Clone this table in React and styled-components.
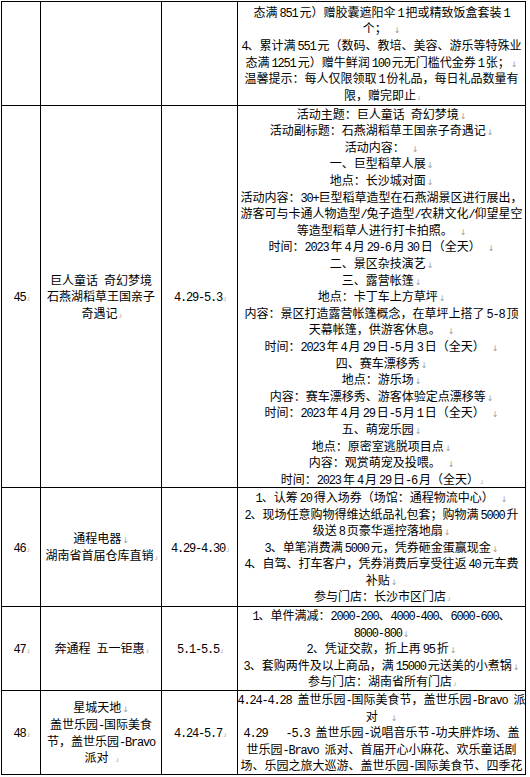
import React from 'react';
import styled, { createGlobalStyle } from 'styled-components';

const GlobalStyle = createGlobalStyle`
  html, body { margin: 0; padding: 0; background: #fff; }
`;

const Page = styled.div`
  padding: 1px 0 0 1px;
  font-family: "Noto Sans CJK SC", "Noto Sans", sans-serif;
  font-size: 12px;
  color: #000;
`;

const Table = styled.div`
  display: grid;
  grid-template-columns: 38px 120px 75px 287px;
  grid-template-rows: 103px 381px 118px 83px 83px;
  gap: 1px;
  background: #000;
  border: 1px solid #000;
  width: max-content;
`;

const Cell = styled.div`
  background: #fff;
  display: flex;
  flex-direction: column;
  justify-content: ${(p) => (p.$cut ? 'flex-start' : 'center')};
  align-items: center;
  overflow: hidden;
  min-width: 0;
`;

const Line = styled.div`
  flex: none;
  height: 16.6px;
  line-height: 16.6px;
  white-space: pre;
  text-align: center;
`;

const Lat = styled.span`
  font-family: "Liberation Mono", monospace;
  letter-spacing: -1.2px;
  margin-left: ${(p) => (p.$l ? 2 : 0)}px;
  margin-right: ${(p) => (p.$r ? 2 : 0)}px;
`;

const Arrow = styled.span`
  font-family: "DejaVu Sans", sans-serif;
  font-size: 8px;
  color: #9a9a9a;
  margin-left: 1px;
`;

const EndMark = styled.span`
  font-family: "DejaVu Sans", sans-serif;
  font-size: 7px;
  color: #a8a8a8;
  letter-spacing: -1px;
  margin-left: 1px;
`;

const CJK = /[\u4e00-\u9fff]/;

function Rich({ text }) {
  const tokens = text.split(/(↓|¤|[\x20-\x7E]+)/).filter(Boolean);
  return tokens.map((t, i) => {
    if (t === '↓') return <Arrow key={i}>↓</Arrow>;
    if (t === '¤') return <EndMark key={i}>.ı</EndMark>;
    if (/^[\x20-\x7E]+$/.test(t)) {
      const prev = tokens[i - 1] || '';
      const next = tokens[i + 1] || '';
      const l = /^[0-9A-Za-z]/.test(t) && CJK.test(prev.slice(-1));
      const r = /[0-9A-Za-z]$/.test(t) && CJK.test(next.charAt(0));
      return (
        <Lat key={i} $l={l} $r={r}>
          {t}
        </Lat>
      );
    }
    return <React.Fragment key={i}>{t}</React.Fragment>;
  });
}

function Lines({ lines }) {
  return lines.map((l, i) => (
    <Line key={i}>
      <Rich text={l} />
    </Line>
  ));
}

const rows = [
  {
    num: [],
    name: [],
    date: [],
    detail: [
      '态满851元）赠胶囊遮阳伞1把或精致饭盒套装1',
      '个； ↓',
      '4、累计满551元（数码、教培、美容、游乐等特殊业',
      '态满1251元）赠牛鲜润100元无门槛代金券1张；↓',
      '温馨提示：每人仅限领取1份礼品，每日礼品数量有',
      '限，赠完即止¤',
    ],
  },
  {
    num: ['45¤'],
    name: ['巨人童话 奇幻梦境', '石燕湖稻草王国亲子', '奇遇记¤'],
    date: ['4.29-5.3¤'],
    detail: [
      '活动主题：巨人童话 奇幻梦境↓',
      '活动副标题：石燕湖稻草王国亲子奇遇记↓',
      '活动内容： ↓',
      '一、巨型稻草人展↓',
      '地点：长沙城对面↓',
      '活动内容：30+巨型稻草造型在石燕湖景区进行展出，',
      '游客可与卡通人物造型/兔子造型/农耕文化/仰望星空',
      '等造型稻草人进行打卡拍照。 ↓',
      '时间：2023年4月29-6月30日（全天） ↓',
      '二、景区杂技演艺↓',
      '三、露营帐篷↓',
      '地点：卡丁车上方草坪↓',
      '内容：景区打造露营帐篷概念，在草坪上搭了5-8顶',
      '天幕帐篷，供游客休息。 ↓',
      '时间：2023年4月29日-5月3日（全天） ↓',
      '四、赛车漂移秀↓',
      '地点：游乐场↓',
      '内容：赛车漂移秀、游客体验定点漂移等↓',
      '时间：2023年4月29日-5月1日（全天） ↓',
      '五、萌宠乐园↓',
      '地点：原密室逃脱项目点↓',
      '内容：观赏萌宠及投喂。 ↓',
      '时间：2023年4月29日-6月（全天）¤',
    ],
  },
  {
    num: ['46¤'],
    name: ['通程电器↓', '湖南省首届仓库直销¤'],
    date: ['4.29-4.30¤'],
    detail: [
      '1、认筹20得入场券（场馆：通程物流中心） ↓',
      '2、现场任意购物得维达纸品礼包套；购物满5000升',
      '级送8页豪华遥控落地扇↓',
      '3、单笔消费满5000元，凭券砸金蛋赢现金↓',
      '4、自驾、打车客户，凭券消费后享受往返40元车费',
      '补贴↓',
      '参与门店：长沙市区门店¤',
    ],
  },
  {
    num: ['47¤'],
    name: ['奔通程 五一钜惠¤'],
    date: ['5.1-5.5¤'],
    detail: [
      '1、单件满减：2000-200、4000-400、6000-600、',
      '8000-800↓',
      '2、凭证交款，折上再95折↓',
      '3、套购两件及以上商品，满15000元送美的小煮锅↓',
      '参与门店：湖南省所有门店¤',
    ],
  },
  {
    num: ['48¤'],
    name: ['星城天地↓', '盖世乐园-国际美食', '节，盖世乐园-Bravo', '派对 ¤'],
    date: ['4.24-5.7¤'],
    detail: [
      '4.24-4.28 盖世乐园-国际美食节，盖世乐园-Bravo 派',
      '对  ↓',
      '4.29   -5.3 盖世乐园-说唱音乐节-功夫胖炸场、盖',
      '世乐园-Bravo 派对、首届开心小麻花、欢乐童话剧',
      '场、乐园之旅大巡游、盖世乐园-国际美食节、四季花',
    ],
    cut: true,
  },
];

export default function App() {
  return (
    <>
      <GlobalStyle />
      <Page>
        <Table>
          {rows.map((r, i) => (
            <React.Fragment key={i}>
              <Cell>
                <Lines lines={r.num} />
              </Cell>
              <Cell>
                <Lines lines={r.name} />
              </Cell>
              <Cell>
                <Lines lines={r.date} />
              </Cell>
              <Cell $cut={r.cut}>
                <Lines lines={r.detail} />
              </Cell>
            </React.Fragment>
          ))}
        </Table>
      </Page>
    </>
  );
}
